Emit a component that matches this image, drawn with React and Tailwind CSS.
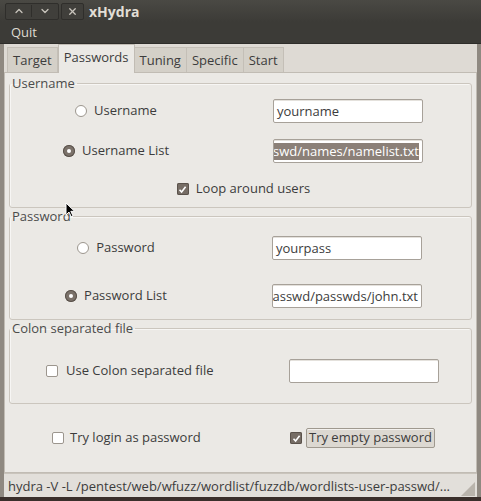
import { ChevronUp, ChevronDown, X } from 'lucide-react';

function Radio({ checked }) {
  if (checked) {
    return (
      <span className="flex h-3 w-3 shrink-0 items-center justify-center rounded-full bg-[#7b726a] shadow-[inset_0_0_0_1px_#5a524b]">
        <span className="h-[4px] w-[4px] rounded-full bg-white" />
      </span>
    );
  }
  return <span className="h-3 w-3 shrink-0 rounded-full border border-[#9c968e] bg-white" />;
}

function Check({ checked }) {
  if (checked) {
    return (
      <span className="flex h-3 w-3 shrink-0 items-center justify-center rounded-[2px] bg-[#766d65] shadow-[inset_0_0_0_1px_#5a524b]">
        <svg width="9" height="9" viewBox="0 0 9 9">
          <path d="M1.5 4.8 L3.6 7 L7.6 1.8" fill="none" stroke="#fff" strokeWidth="1.6" />
        </svg>
      </span>
    );
  }
  return <span className="h-3 w-3 shrink-0 rounded-[2px] border border-[#9c968e] bg-white" />;
}

// long paths show their tail, like a scrolled GtkEntry
function Entry({ value, selected, tail, className = '' }) {
  return (
    <div
      className={`flex h-6 w-[150px] shrink-0 items-center overflow-hidden rounded-[2px] border border-[#a7a199] bg-white px-[3px] shadow-[inset_0_1px_0_#e4e1dc] ${tail ? 'justify-end' : 'justify-start'} ${className}`}
    >
      {value && (
        <span
          className={`whitespace-nowrap leading-[17px] ${selected ? 'bg-[#8b8078] text-white' : 'text-[#3c3c3c]'}`}
        >
          {value}
        </span>
      )}
    </div>
  );
}

function Group({ label, className = '', children }) {
  return (
    <fieldset
      className={`mx-[4px] rounded-[3px] border border-[#cbc6be] p-0 shadow-[inset_1px_1px_0_#f7f6f4] ${className}`}
    >
      <legend className="ml-0 px-[2px] leading-4 text-[#4c4c4c]">{label}</legend>
      {children}
    </fieldset>
  );
}

function RadioRow({ checked, label, entry, selected, tail, ml }) {
  return (
    <div className="flex h-6 items-center">
      <div className="flex w-[212px] items-center justify-center gap-[7px]">
        <Radio checked={checked} />
        <span>{label}</span>
      </div>
      <Entry value={entry} selected={selected} tail={tail} className={ml} />
    </div>
  );
}

const tabs = ['Target', 'Passwords', 'Tuning', 'Specific', 'Start'];

export default function App() {
  return (
    <div className="relative flex h-[501px] w-[481px] flex-col overflow-hidden bg-[#3c3b37] font-['Open_Sans',sans-serif] text-[13px] text-[#3c3c3c]">
      {/* title bar */}
      <div className="flex h-[22px] items-center bg-gradient-to-b from-[#4a4944] to-[#3c3b37] pl-[5px]">
        <div className="flex h-[17px] items-center rounded-[2px] border border-[#2f2e2b] bg-[#403f3b]">
          <span className="flex w-[26px] justify-center border-r border-[#2f2e2b] text-[#c9c5bd]">
            <ChevronUp size={12} strokeWidth={2.6} />
          </span>
          <span className="flex w-[26px] justify-center text-[#c9c5bd]">
            <ChevronDown size={12} strokeWidth={2.6} />
          </span>
        </div>
        <div className="ml-[2px] flex h-[17px] w-[23px] items-center justify-center rounded-[2px] border border-[#2f2e2b] bg-[#403f3b] text-[#c9c5bd]">
          <X size={11} strokeWidth={2.8} />
        </div>
        <span className="ml-[5px] text-[14px] font-bold text-[#e2ded6]">xHydra</span>
      </div>

      {/* menu bar */}
      <div className="flex h-[22px] items-center border-b border-[#2e2d2a] bg-[#3c3b37] pl-[11px] text-[#dfdbd2]">
        Quit
      </div>

      {/* window body */}
      <div className="flex flex-1 border-l-[4px] border-r-[4px] border-[#8f8981] bg-[#dedad4]">
        <div className="flex flex-1 flex-col">
          {/* tabs */}
          <div className="flex h-[28px] items-end pl-[3px]">
            {tabs.map((t) =>
              t === 'Passwords' ? (
                <div
                  key={t}
                  className="relative z-10 -mb-px flex h-[29px] items-center border border-b-0 border-[#c1bcb4] bg-[#ebe9e5] px-[5px] pb-[2px]"
                >
                  {t}
                </div>
              ) : (
                <div
                  key={t}
                  className="flex h-[25px] items-center border border-b-0 border-l-0 border-[#c4bfb7] bg-[#d4d0c8] px-[5px] pt-[1px] first:border-l"
                >
                  {t}
                </div>
              )
            )}
          </div>

          {/* page */}
          <div className="flex flex-1 flex-col border border-[#c1bcb4] bg-[#ebe9e5] pt-[2px]">
            <Group label="Username" className="pb-[10px]">
              <div className="flex flex-col gap-4 pt-[8px]">
                <RadioRow label="Username" entry="yourname" ml="ml-[51px]" />
                <RadioRow
                  checked
                  label="Username List"
                  entry="/pentest/web/wfuzz/wordlist/fuzzdb/wordlists-user-passwd/names/namelist.txt"
                  selected
                  tail
                  ml="ml-[51px]"
                />
              </div>
              <div className="mt-[18px] flex h-4 items-center justify-center gap-[7px] pl-[6px]">
                <Check checked />
                <span>Loop around users</span>
              </div>
            </Group>

            <Group label="Password" className="pb-[11px]">
              <div className="flex flex-col gap-6 pt-[12px]">
                <RadioRow label="Password" entry="yourpass" ml="ml-[50px]" />
                <RadioRow
                  checked
                  label="Password List"
                  entry="/pentest/web/wfuzz/wordlist/fuzzdb/wordlists-user-passwd/passwds/john.txt"
                  tail
                  ml="ml-[50px]"
                />
              </div>
            </Group>

            <Group label="Colon separated file" className="pb-[20px]">
              <div className="mt-[23px] flex h-6 items-center">
                <div className="flex w-[279px] items-center gap-2 pl-[36px]">
                  <Check />
                  <span>Use Colon separated file</span>
                </div>
                <Entry value="" />
              </div>
            </Group>

            <div className="mt-[24px] flex h-5 items-center pl-[47px]">
              <div className="flex w-[238px] items-center gap-[6px]">
                <Check />
                <span>Try login as password</span>
              </div>
              <Check checked />
              <span className="ml-[4px] flex h-5 items-center rounded-[2px] border border-[#9f998f] bg-[#dcd8d1] px-[2px] shadow-[inset_0_1px_0_#f3f1ee]">
                Try empty password
              </span>
            </div>
          </div>

          {/* status bar */}
          <div className="flex h-[24px] items-center border-t border-[#c9c4bc] bg-[#e2dfda] pl-[4px] pr-[2px] pt-[2px]">
            <span className="flex-1 overflow-hidden whitespace-nowrap">
              hydra -V -L /pentest/web/wfuzz/wordlist/fuzzdb/wordlists-user-passwd/...
            </span>
            <svg width="14" height="14" viewBox="0 0 14 14" className="mt-[4px] shrink-0">
              <path d="M14 0 L14 14 L0 14 Z" fill="#b9b4ac" />
            </svg>
          </div>
        </div>
      </div>
      <div className="h-[4px] bg-[#3a2f2b]" />

      {/* mouse pointer */}
      <svg width="11" height="16" viewBox="0 0 11 16" className="absolute left-[65px] top-[202px]">
        <path d="M1 1 L1 13 L4 10 L6.2 14.6 L8 13.8 L5.8 9.3 L9.6 9.3 Z" fill="#000" stroke="#fff" strokeWidth="1" />
      </svg>
    </div>
  );
}
